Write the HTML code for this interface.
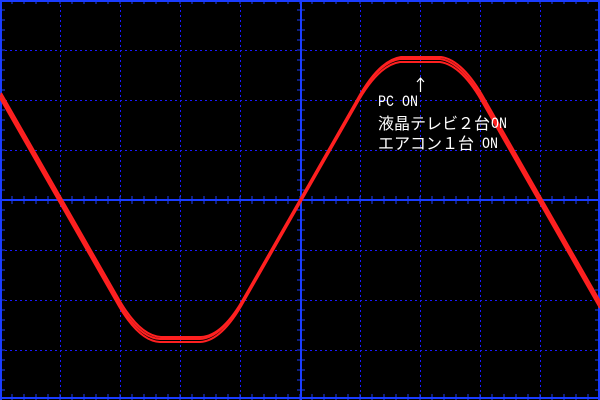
<!DOCTYPE html>
<html><head><meta charset="utf-8"><style>
html,body{margin:0;padding:0;background:#000;width:600px;height:400px;overflow:hidden}
svg{display:block}
.l{position:absolute;color:#fff;font:16px "Liberation Mono",monospace;line-height:20px;white-space:pre;transform:scaleX(0.833);transform-origin:0 0}
.j{position:absolute;color:#fff;font:16px "Noto Sans CJK JP","WenQuanYi Zen Hei",sans-serif;line-height:20px;white-space:pre}
</style></head><body>
<svg id="s" width="600" height="400" xmlns="http://www.w3.org/2000/svg">
<g stroke="#1a1aff" stroke-width="1" stroke-dasharray="2 3" fill="none" id="grid"></g>
<g stroke="#1a3cff" stroke-width="2" fill="none">
<line x1="301" y1="0" x2="301" y2="400"/><line x1="0" y1="200" x2="600" y2="200"/>
<line x1="1" y1="0" x2="1" y2="400"/><line x1="0" y1="398" x2="600" y2="398"/>
<line x1="599" y1="0" x2="599" y2="400"/><line x1="0" y1="1" x2="600" y2="1"/>
</g>
<g stroke="#1a3cff" stroke-width="1" id="ticks"></g>
<g fill="none" stroke="#ff2020" stroke-width="2">
<path id="p" d="M0,95 L116,298 Q138,338 160,339 L200,339 Q222,338 244,298 L356,102 Q378,62 400,59 L440,59 Q462,62 484,102 L600,305"/>
<use href="#p" transform="translate(0,3)"/>
<use href="#p" transform="translate(1,-2)"/>
</g>
<g stroke="#fff" stroke-width="1.2" fill="none"><path d="M420.5,78 V92 M417,82 L420.5,78 L424,82"/></g>
</svg>
<div class="l" style="left:378px;top:92px">PC ON</div>
<div class="j" style="left:378px;top:112px">液晶テレビ２台</div>
<div class="l" style="left:491px;top:114px">ON</div>
<div class="j" style="left:378px;top:132px">エアコン１台</div>
<div class="l" style="left:482px;top:134px">ON</div>
<script>
var ns="http://www.w3.org/2000/svg",g=document.getElementById('grid'),tk=document.getElementById('ticks');
function L(p,a,b,c,d){var l=document.createElementNS(ns,'line');l.setAttribute('x1',a);l.setAttribute('y1',b);l.setAttribute('x2',c);l.setAttribute('y2',d);p.appendChild(l);}
for(var x=60;x<600;x+=60)if(x!=300)L(g,x+0.5,0,x+0.5,400);
for(var y=50;y<400;y+=50)if(y!=200)L(g,0,y+0.5,600,y+0.5);
for(var x=0;x<600;x+=12){L(tk,x,196,x,204);L(tk,x,394,x,400);L(tk,x,0,x,4);}
for(var y=0;y<400;y+=10){L(tk,297,y,305,y);L(tk,0,y,5,y);L(tk,595,y,600,y);}
</script>
</body></html>
